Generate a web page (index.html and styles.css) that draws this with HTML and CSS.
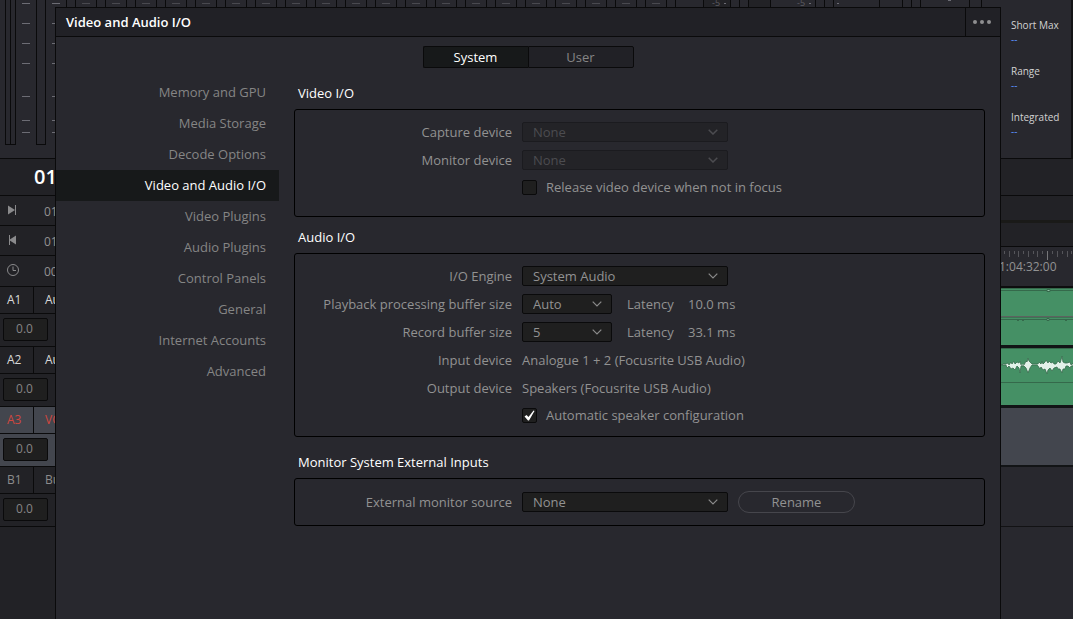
FILE: index.html
```html
<!DOCTYPE html>
<html lang="en">
<head>
  <meta charset="UTF-8">
  <title>Video and Audio I/O</title>
  <meta name="viewport" content="width=device-width, initial-scale=1.0">
  <link rel="stylesheet" href="styles.css">
</head>
<body>

  <div class="workspace">

    <!-- Left: meters, timecode and track headers -->
    <aside class="tracks">
      <svg class="meters" width="55" height="158" viewBox="0 0 55 158" shape-rendering="crispEdges" aria-hidden="true">
        <path class="line" d="M5.5 0V144.5H15.5V0M10.5 0V144M36.5 0V144.5H45.5V0"/>
        <path class="tick" d="M22 3.5h8M22 23.5h8M22 43.5h8M22 63.5h8M22 96.5h8M22 120.5h8M22 132.5h8"/>
        <path class="tick" d="M52 3.5h3M52 23.5h3M52 43.5h3M52 63.5h3M52 96.5h3M52 120.5h3M52 132.5h3"/>
      </svg>
      <div class="timecode">01</div>
      <div class="time-row">
        <svg width="12" height="12" viewBox="0 0 12 12"><path d="M1 1.500L8 6L1 10.500z" fill="#8a8a8c"/><path d="M8.500 1V11" stroke="#8a8a8c"/></svg>
        <span>01</span>
      </div>
      <div class="time-row">
        <svg width="12" height="12" viewBox="0 0 12 12"><path d="M9 1.500L2 6L9 10.500z" fill="#8a8a8c"/><path d="M2.500 1V11" stroke="#8a8a8c"/></svg>
        <span>01</span>
      </div>
      <div class="time-row last">
        <svg width="12" height="12" viewBox="0 0 12 12" fill="none" stroke="#8a8a8c"><circle cx="6" cy="6" r="5.500"/><path d="M6 2.500V6.500H9"/></svg>
        <span>00</span>
      </div>

      <div class="track">
        <div class="track-head"><b>A1</b><span>Audio 1</span></div>
        <div class="track-body"><input type="text" value="0.0" aria-label="A1 level"></div>
      </div>
      <div class="track">
        <div class="track-head"><b>A2</b><span>Audio 2</span></div>
        <div class="track-body"><input type="text" value="0.0" aria-label="A2 level"></div>
      </div>
      <div class="track selected">
        <div class="track-head"><b>A3</b><span>VO</span></div>
        <div class="track-body"><input type="text" value="0.0" aria-label="A3 level"></div>
      </div>
      <div class="track bus">
        <div class="track-head"><b>B1</b><span>Bus 1</span></div>
        <div class="track-body"><input type="text" value="0.0" aria-label="B1 level"></div>
      </div>
    </aside>

    <main class="center">
      <div class="meter-strip">
        <svg width="946" height="7" viewBox="55 0 946 7" shape-rendering="crispEdges" aria-hidden="true">
          <defs>
            <pattern id="meter" x="66" y="0" width="30" height="7" patternUnits="userSpaceOnUse">
              <path class="line" d="M.5 0V7M9.500 0V7"/>
              <path class="tick dim" d="M16 3.500h8"/>
            </pattern>
          </defs>
          <path class="tick" d="M52 3.500h8"/>
          <rect x="66" y="0" width="610" height="7" fill="url(#meter)"/>
          <path d="M703 0h27v7h-27zM748 0h22v7h-22z" fill="#222226"/>
          <path class="line" d="M703.500 0V7M730.500 0V7M739.500 0V7M748.500 0V7M770.500 0V7M815.500 0V7M824.500 0V7M833.500 0V7M879.500 0V7M902.500 0V7M911.500 0V7M920.500 0V7M969.500 0V7M981.500 0V7"/>
          <path class="tick" d="M724 3.500h2M809 3.500h2M837 3.500h2M948 .5h3"/>
          <text x="712" y="6">-5</text>
          <text x="797" y="6">-5</text>
        </svg>
      </div>

      <section class="dialog">
        <header class="titlebar">
          <h1>Video and Audio I/O</h1>
          <button class="more" aria-label="More options">
            <svg width="20" height="6" viewBox="0 0 20 6" fill="#8e8e90"><circle cx="3" cy="3" r="2"/><circle cx="10" cy="3" r="2"/><circle cx="17" cy="3" r="2"/></svg>
          </button>
        </header>

        <div class="tabs">
          <button class="active">System</button>
          <button>User</button>
        </div>

        <div class="content">
          <nav>
            <a href="#memory">Memory and GPU</a>
            <a href="#media">Media Storage</a>
            <a href="#decode">Decode Options</a>
            <a href="#video-audio" class="active">Video and Audio I/O</a>
            <a href="#video-plugins">Video Plugins</a>
            <a href="#audio-plugins">Audio Plugins</a>
            <a href="#control">Control Panels</a>
            <a href="#general">General</a>
            <a href="#accounts">Internet Accounts</a>
            <a href="#advanced">Advanced</a>
          </nav>

          <form class="settings">
            <h2>Video I/O</h2>
            <div class="panel video">
              <div class="row">
                <label class="name" for="capture">Capture device</label>
                <select id="capture" disabled><option>None</option></select>
              </div>
              <div class="row">
                <label class="name" for="monitor">Monitor device</label>
                <select id="monitor" disabled><option>None</option></select>
              </div>
              <div class="row check">
                <input type="checkbox" id="release">
                <label for="release">Release video device when not in focus</label>
              </div>
            </div>

            <h2>Audio I/O</h2>
            <div class="panel audio">
              <div class="row">
                <label class="name" for="engine">I/O Engine</label>
                <select id="engine"><option>System Audio</option></select>
              </div>
              <div class="row">
                <label class="name" for="playback">Playback processing buffer size</label>
                <select id="playback" class="short"><option>Auto</option></select>
                <span class="latency">Latency</span><span>10.0 ms</span>
              </div>
              <div class="row">
                <label class="name" for="record">Record buffer size</label>
                <select id="record" class="short"><option>5</option></select>
                <span class="latency">Latency</span><span>33.1 ms</span>
              </div>
              <div class="row">
                <span class="name">Input device</span>
                <span>Analogue 1 + 2 (Focusrite USB Audio)</span>
              </div>
              <div class="row">
                <span class="name">Output device</span>
                <span>Speakers (Focusrite USB Audio)</span>
              </div>
              <div class="row check">
                <input type="checkbox" id="speakers" checked>
                <label for="speakers">Automatic speaker configuration</label>
              </div>
            </div>

            <h2>Monitor System External Inputs</h2>
            <div class="panel external">
              <div class="row">
                <label class="name" for="external">External monitor source</label>
                <select id="external"><option>None</option></select>
                <button type="button" class="rename">Rename</button>
              </div>
            </div>
          </form>
        </div>
      </section>
    </main>

    <!-- Right: loudness and timeline -->
    <aside class="timeline">
      <dl class="loudness">
        <dt>Short Max</dt><dd>--</dd>
        <dt>Range</dt><dd>--</dd>
        <dt>Integrated</dt><dd>--</dd>
      </dl>
      <div class="toolbar"></div>
      <div class="scroller"></div>
      <div class="toolbar small"></div>
      <div class="ruler">
        <svg width="72" height="9" viewBox="0 0 72 9" shape-rendering="crispEdges" stroke="#55555a" aria-hidden="true">
          <path d="M3.500 0v3M8.500 0v6M13.500 0v3M17.500 0v6M22.500 0v3M27.500 0v6M32.500 0v3M36.500 0v6M41.500 0v3M51.500 0v3M56.500 0v6M61.500 0v3M66.500 0v6M70.500 0v3"/>
          <path d="M46.500 0v9" stroke="#77777a"/>
        </svg>
        <span>1:04:32:00</span>
      </div>
      <div class="clip">
        <svg width="72" height="57" viewBox="0 0 72 57" aria-hidden="true">
          <path d="M0 .5H72M0 2.500H72M0 31.500H72" stroke="#35694b"/>
          <path d="M0 28.500H72" stroke="#5d6260"/>
          <path d="M0 29.500H72" stroke="#3b7553"/>
          <path d="M46 1.500h3v2h-3zM46 30.500h2v2h-2z" fill="#8fc0a3" stroke="#35694b"/>
          <path d="M16 32.500h2M21 32.500h2M64 32.500h2" stroke="#35694b"/>
        </svg>
      </div>
      <div class="clip">
        <svg width="72" height="57" viewBox="0 0 72 57" aria-hidden="true">
          <path d="M0 .5H72M0 34.500H72" stroke="#35694b"/>
          <path d="M0 16.500H72" stroke="#b9d6c5"/>
          <path d="M0 16L1 17L2 16H5L7 15L8 17L10 14L11 16L13 13L14 16L16 14L18 15L19 13L20 17H23L25 13L26 14L27 10L28 13L30 15L31 16H37L38 14L40 16L41 13L42 16L44 14L45 12L47 15L48 13L50 15L52 14L53 16H55L57 13L59 15L60 12L61 8L62 14L64 15H66L69 14L70 17L72 15V18H70L69 20L67 18H65L64 21L62 21L61 25L59 21L57 21L56 19L53 20L51 23L49 20L47 22L46 26L44 21L42 22L40 19L39 21L37 18L36 17H31L29 20L27 25L25 20L23 18H20L19 25L18 20L16 18L14 22L12 20L10 21L8 18L6 20L5 17H0Z" fill="#e3f1e9" stroke="#376b4e" stroke-width="1" stroke-opacity=".8"/>
        </svg>
      </div>
      <div class="clip empty"></div>
      <div class="bus-lane"></div>
    </aside>

  </div>

</body>
</html>
```
FILE: styles.css
```css
* {
  box-sizing: border-box;
}

body {
  margin: 0;
  background: #28282e;
  color: #929292;
  font-family: 'Open Sans', 'Noto Sans', sans-serif;
  font-size: 13px;
  line-height: 18px;
}

button,
input,
select {
  font: inherit;
  color: inherit;
}

svg {
  display: block;
  flex: none;
}

.line {
  fill: none;
  stroke: #0a0a0b;
}

.tick {
  stroke: #6c6c74;
}

.tick.dim {
  stroke: #49494f;
}

.workspace {
  display: grid;
  grid-template-columns: 55px minmax(0, 1fr) 72px;
  min-height: 100vh;
}

/* Track list */
.tracks {
  overflow: hidden;
  background: #222226;
}

.meters {
  background: #28282e;
}

.timecode {
  height: 37px;
  padding-left: 34px;
  border-top: 1px solid #0a0a0b;
  color: #fff;
  font-size: 20px;
  font-weight: 600;
  line-height: 36px;
}

.time-row {
  display: flex;
  gap: 25px;
  height: 30px;
  padding: 8px 0 0 7px;
  border-top: 1px solid #0a0a0b;
  font-size: 12px;
  line-height: 16px;
}

.time-row.last {
  height: 31px;
}

.track {
  height: 60px;
  color: #d8d8d8;
  font-size: 12px;
}

.track-head {
  display: flex;
  height: 27px;
  border-top: 1px solid #0a0a0b;
  line-height: 26px;
  white-space: nowrap;
}

.track-head b {
  flex: none;
  width: 34px;
  padding-left: 7px;
  border-right: 1px solid #0a0a0b;
  font-weight: normal;
}

.track-head span {
  padding-left: 11px;
}

.track-body {
  height: 33px;
  padding: 4px 3px;
  border-top: 1px solid #0a0a0b;
}

.track-body input {
  display: block;
  width: 45px;
  height: 23px;
  padding: 0 2px 2px 0;
  border: 1px solid #0a0a0b;
  border-radius: 2px;
  background: #1f1f1f;
  color: #858585;
  text-align: center;
}

.track.selected {
  background: #43464e;
  color: #d0473f;
}

.track.bus {
  height: 61px;
  border-bottom: 1px solid #0a0a0b;
  color: #8c8c8c;
}

/* Settings dialog */
.center {
  display: flex;
  flex-direction: column;
}

.meter-strip {
  height: 7px;
  overflow: hidden;
}

.meter-strip text {
  fill: #5c5c62;
  font-size: 9px;
}

.dialog {
  flex: 1;
  border: 1px solid #0a0a0b;
  border-bottom: none;
  background: #28282e;
}

.titlebar {
  display: flex;
  justify-content: space-between;
  height: 29px;
  border-bottom: 1px solid #0a0a0b;
  background: #212126;
}

.titlebar h1 {
  margin: 0;
  padding-left: 10px;
  color: #fff;
  font-size: 13px;
  font-weight: 600;
  line-height: 28px;
}

.more {
  display: flex;
  align-items: center;
  justify-content: center;
  width: 35px;
  padding: 0 2px 0 0;
  border: none;
  border-left: 1px solid #0a0a0b;
  background: none;
}

.tabs {
  display: flex;
  justify-content: center;
  padding: 9px 0;
}

.tabs button {
  width: 106px;
  height: 22px;
  padding: 0;
  border: 1px solid #0a0a0b;
  border-radius: 0 2px 2px 0;
  background: #212126;
  color: #858585;
}

.tabs .active {
  width: 105px;
  border-right: none;
  border-radius: 2px 0 0 2px;
  background: #17191a;
  color: #fff;
}

.content {
  display: flex;
  gap: 15px;
  padding-right: 15px;
}

nav {
  flex: none;
  width: 223px;
}

nav a {
  display: block;
  padding-right: 13px;
  color: #858585;
  line-height: 31px;
  text-align: right;
  text-decoration: none;
}

nav a.active {
  background: #17191a;
  color: #fff;
}

.settings {
  flex: 1;
  padding-top: 4px;
}

.settings h2 {
  height: 28px;
  margin: 0;
  padding-left: 4px;
  color: #fff;
  font-size: 13px;
  font-weight: normal;
  line-height: 24px;
}

.panel {
  margin-bottom: 8px;
  padding: 8px 0;
  border: 1px solid #000;
  border-radius: 3px;
}

.panel.video {
  padding-bottom: 16px;
}

.panel.audio {
  margin-bottom: 13px;
}

.panel.external {
  padding: 9px 0;
}

.row {
  display: flex;
  align-items: center;
  height: 28px;
}

.row.check {
  height: 26px;
  padding-left: 227px;
}

.name {
  flex: none;
  width: 217px;
  margin-right: 10px;
  text-align: right;
}

select {
  appearance: none;
  width: 206px;
  height: 20px;
  padding: 0 10px;
  border: 1px solid #0a0a0b;
  border-radius: 2px;
  background: #1f1f1f url("data:image/svg+xml,%3Csvg xmlns='http://www.w3.org/2000/svg' width='10' height='6' fill='none' stroke='%238a8a8a' stroke-width='1.2'%3E%3Cpath d='M.7.7L5 5L9.300.7'/%3E%3C/svg%3E") no-repeat right 9px center;
  line-height: 18px;
}

select:disabled {
  border-color: #1b1b1f;
  background-color: #232327;
  background-image: url("data:image/svg+xml,%3Csvg xmlns='http://www.w3.org/2000/svg' width='10' height='6' fill='none' stroke='%234c4c50' stroke-width='1.5'%3E%3Cpath d='M.7.7L5 5L9.300.7'/%3E%3C/svg%3E");
  color: #4c4c50;
  opacity: 1;
}

select.short {
  width: 90px;
}

.latency {
  width: 61px;
  margin-left: 15px;
}

input[type="checkbox"] {
  appearance: none;
  width: 15px;
  height: 15px;
  margin: 0 9px 0 0;
  border: 1px solid #0a0a0b;
  border-radius: 2px;
  background: #1f1f1f;
}

input[type="checkbox"]:checked {
  background: #1f1f1f url("data:image/svg+xml,%3Csvg xmlns='http://www.w3.org/2000/svg' width='11' height='11'%3E%3Cpath d='M.5 6.500L2.500 5L4.500 7L9.500 .5L10.500 1L5 10.500H4z' fill='%23fff'/%3E%3C/svg%3E") no-repeat center;
}

.rename {
  width: 117px;
  height: 22px;
  margin-left: 10px;
  padding: 0;
  border: 1px solid #46464c;
  border-radius: 11px;
  background: none;
}

/* Loudness and timeline */
.timeline {
  overflow: hidden;
}

.loudness {
  height: 159px;
  margin: 0;
  padding: 17px 0 0 10px;
  border-right: 2px solid #141416;
  border-bottom: 1px solid #0a0a0b;
  font-size: 10px;
  line-height: 16px;
  white-space: nowrap;
}

.loudness dt {
  color: #d2d2d2;
}

.loudness dd {
  height: 30px;
  margin: 0;
  color: #5b90ff;
  line-height: 12px;
}

.toolbar {
  height: 37px;
  border-bottom: 1px solid #0a0a0b;
  background: #222226;
}

.scroller {
  height: 27px;
  border-bottom: 3px solid #1a1a18;
  background: #222226;
}

.toolbar.small {
  height: 24px;
}

.ruler {
  height: 41px;
  padding-top: 4px;
  border-bottom: 2px solid #0d0d0e;
  font-size: 12px;
  white-space: nowrap;
}

.ruler span {
  display: block;
  margin: -2px 0 0 -2px;
}

.clip {
  height: 60px;
  border-bottom: 3px solid #121416;
  background: #459065;
}

.clip.empty {
  height: 59px;
  border-bottom-width: 2px;
  background: #43464e;
}

.bus-lane {
  height: 60px;
  border-bottom: 1px solid #121214;
}
```
